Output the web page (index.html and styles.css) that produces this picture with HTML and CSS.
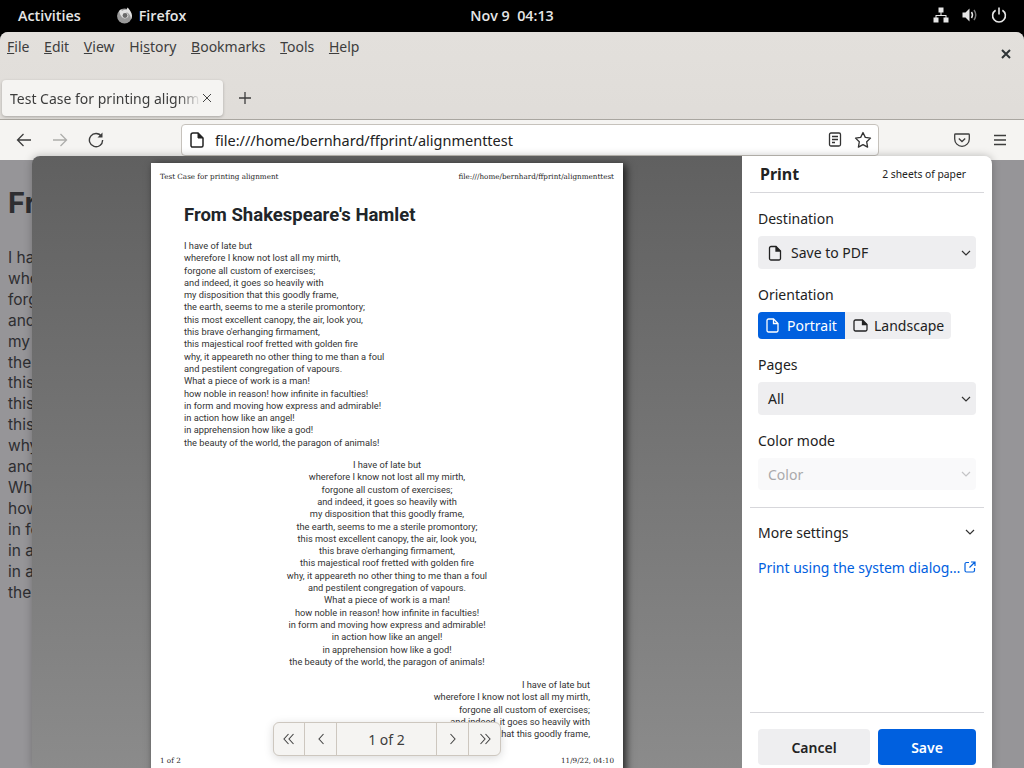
FILE: index.html
```html
<!DOCTYPE html>
<html lang="en">
<head>
    <meta charset="UTF-8">
    <title>Test Case for printing alignment</title>
    <link rel="stylesheet" href="styles.css">
</head>
<body>
    <div class="topbar">
        <div class="topbar-left">
            <span class="activities">Activities</span>
            <span class="app">
                <svg width="17" height="17" viewBox="0 0 16 16"><circle cx="8" cy="8.500" r="7" fill="#9a9a9a"/><path d="M3 4 C3.500 2.500 4.500 2.500 5 2 C5 3 5.500 3.500 6 3.500 C7.500 2.500 9 2.500 10 3 C10 2 10.500 1 11 0.500 C12 2 14.500 4 15 8 C15 9.500 14.500 11 14 11.500 C14 8 12 5.500 9.500 5 C11 6 12 7.500 11.500 9 C10.500 11 7 11.500 5.500 9.500 C4 7.500 3.500 6 3 4Z" fill="#e2e2e2"/><circle cx="8.500" cy="8" r="2.300" fill="#6a6a6a"/></svg>
                Firefox
            </span>
        </div>
        <div class="clock">Nov 9&nbsp; 04:13</div>
        <div class="tray">
            <svg width="16" height="16" viewBox="0 0 16 16" fill="#e6e6e6"><path d="M5.500 0.500h5v5h-5zM0.500 10.500h5v5h-5zM10.500 10.500h5v5h-5z"/><path d="M7.500 5h1v3h5v3h-1V9H3.500v2h-1V8h5z"/></svg>
            <svg width="16" height="16" viewBox="0 0 16 16" fill="none"><path d="M0.500 5.500h3l4-4v13l-4-4h-3z" fill="#e6e6e6"/><path d="M9.500 5 Q11.500 8 9.500 11" stroke="#e6e6e6" stroke-width="1.500"/><path d="M12 3 Q15.500 8 12 13" stroke="#777" stroke-width="1.500"/></svg>
            <svg width="16" height="16" viewBox="0 0 16 16" fill="none" stroke="#e6e6e6" stroke-width="1.600"><path d="M4.600 3.200 A6.400 6.400 0 1 0 11.400 3.200"/><path d="M8 0.500V7.500"/></svg>
        </div>
    </div>

    <div class="window">
        <div class="chrome">
            <div class="menubar">
                <div class="menus">
                    <span><u>F</u>ile</span>
                    <span><u>E</u>dit</span>
                    <span><u>V</u>iew</span>
                    <span>Hi<u>s</u>tory</span>
                    <span><u>B</u>ookmarks</span>
                    <span><u>T</u>ools</span>
                    <span><u>H</u>elp</span>
                </div>
                <svg class="win-close" width="10" height="10" viewBox="0 0 10 10" stroke="#2e3436" stroke-width="2"><path d="M1 1l8 8M9 1l-8 8"/></svg>
            </div>
            <div class="tabbar">
                <div class="tab">
                    <span class="tab-title">Test Case for printing alignment</span>
                    <svg width="12" height="12" viewBox="0 0 12 12" stroke="#444" stroke-width="1"><path d="M2 2l8 8M10 2l-8 8"/></svg>
                </div>
                <svg class="new-tab" width="14" height="14" viewBox="0 0 14 14" stroke="#3d3d3d" stroke-width="1.300"><path d="M7 1v12M1 7h12"/></svg>
            </div>
            <div class="navbar">
                <svg class="nav-back" width="16" height="16" viewBox="0 0 16 16" fill="none" stroke="#3d3d3d" stroke-width="1.300"><path d="M15 8H1.500M7.500 2L1.500 8l6 6"/></svg>
                <svg class="nav-fwd" width="16" height="16" viewBox="0 0 16 16" fill="none" stroke="#adadab" stroke-width="1.300"><path d="M1 8h13.500M8.500 2l6 6-6 6"/></svg>
                <svg class="nav-reload" width="16" height="16" viewBox="0 0 16 16" fill="none" stroke="#3d3d3d" stroke-width="1.400"><path d="M13.500 4.500A6.600 6.600 0 1 0 14.600 8"/><path d="M9.500 5.500h5v-5z" fill="#3d3d3d" stroke="none"/></svg>
                <div class="urlbar">
                    <svg width="14" height="16" viewBox="0 0 14 16" fill="none" stroke="#222" stroke-width="1.500"><path d="M3 1h5l5 5v7.500a1.500 1.500 0 0 1-1.500 1.500h-8.500A1.500 1.500 0 0 1 1 13.500v-10.500A2 2 0 0 1 3 1z"/><path d="M8 1v5h5" fill="#222" stroke-width="1"/></svg>
                    <span class="url">file:///home/bernhard/ffprint/alignmenttest</span>
                    <svg class="url-reader" width="14" height="15" viewBox="0 0 14 15" fill="none" stroke="#333" stroke-width="1.300"><rect x="1.500" y="1" width="11" height="13" rx="1.500"/><path d="M4 4.500h6M4 7.500h6M4 10.500h3"/></svg>
                    <svg width="18" height="17" viewBox="0 0 18 17" fill="none" stroke="#333" stroke-width="1.300"><path d="M9 1.500l2.300 4.900 5.200.7-3.800 3.700.9 5.300L9 13.600l-4.600 2.500.9-5.300L1.500 7.100l5.200-.7z" stroke-linejoin="round"/></svg>
                </div>
                <div class="nav-right">
                    <svg width="16" height="14" viewBox="0 0 16 14" fill="none" stroke="#3d3d3d" stroke-width="1.300"><path d="M1.500 1h13a.8.8 0 0 1 .8.8V6a7.300 7.300 0 0 1-14.600 0V1.800a.8.8 0 0 1 .8-.8z"/><path d="M4.800 5.500L8 8.500l3.200-3"/></svg>
                    <svg width="14" height="12" viewBox="0 0 14 12" stroke="#3d3d3d" stroke-width="1.300"><path d="M1 1.500h12M1 6h12M1 10.500h12"/></svg>
                </div>
            </div>
        </div>

        <div class="page-behind">
            <h1>From Shakespeare's Hamlet</h1>
            <p>I have of late but<br>wherefore I know not lost all my mirth,<br>forgone all custom of exercises;<br>and indeed, it goes so heavily with<br>my disposition that this goodly frame,<br>the earth, seems to me a sterile promontory;<br>this most excellent canopy, the air, look you,<br>this brave o'erhanging firmament,<br>this majestical roof fretted with golden fire<br>why, it appeareth no other thing to me than a foul<br>and pestilent congregation of vapours.<br>What a piece of work is a man!<br>how noble in reason! how infinite in faculties!<br>in form and moving how express and admirable!<br>in action how like an angel!<br>in apprehension how like a god!<br>the beauty of the world, the paragon of animals!</p>
        </div>

        <div class="print-dialog">
            <div class="preview">
                <div class="paper">
                    <div class="paper-head">
                        <span>Test Case for printing alignment</span>
                        <span>file:///home/bernhard/ffprint/alignmenttest</span>
                    </div>
                    <div class="paper-body">
                        <h2>From Shakespeare's Hamlet</h2>
                        <p>I have of late but<br>wherefore I know not lost all my mirth,<br>forgone all custom of exercises;<br>and indeed, it goes so heavily with<br>my disposition that this goodly frame,<br>the earth, seems to me a sterile promontory;<br>this most excellent canopy, the air, look you,<br>this brave o'erhanging firmament,<br>this majestical roof fretted with golden fire<br>why, it appeareth no other thing to me than a foul<br>and pestilent congregation of vapours.<br>What a piece of work is a man!<br>how noble in reason! how infinite in faculties!<br>in form and moving how express and admirable!<br>in action how like an angel!<br>in apprehension how like a god!<br>the beauty of the world, the paragon of animals!</p>
                        <p class="center">I have of late but<br>wherefore I know not lost all my mirth,<br>forgone all custom of exercises;<br>and indeed, it goes so heavily with<br>my disposition that this goodly frame,<br>the earth, seems to me a sterile promontory;<br>this most excellent canopy, the air, look you,<br>this brave o'erhanging firmament,<br>this majestical roof fretted with golden fire<br>why, it appeareth no other thing to me than a foul<br>and pestilent congregation of vapours.<br>What a piece of work is a man!<br>how noble in reason! how infinite in faculties!<br>in form and moving how express and admirable!<br>in action how like an angel!<br>in apprehension how like a god!<br>the beauty of the world, the paragon of animals!</p>
                        <p class="right">I have of late but<br>wherefore I know not lost all my mirth,<br>forgone all custom of exercises;<br>and indeed, it goes so heavily with<br>my disposition that this goodly frame,</p>
                    </div>
                    <div class="paper-foot">
                        <span>1 of 2</span>
                        <span>11/9/22, 04:10</span>
                    </div>
                </div>
                <div class="pager">
                    <button class="pager-btn"><svg width="12" height="12" viewBox="0 0 12 12" fill="none" stroke="#444" stroke-width="1.100"><path d="M5.500 1L1 6l4.500 5M10.500 1L6 6l4.500 5"/></svg></button>
                    <button class="pager-btn"><svg width="8" height="12" viewBox="0 0 8 12" fill="none" stroke="#444" stroke-width="1.100"><path d="M6.500 1L2 6l4.500 5"/></svg></button>
                    <div class="pager-label">1 of 2</div>
                    <button class="pager-btn"><svg width="8" height="12" viewBox="0 0 8 12" fill="none" stroke="#444" stroke-width="1.100"><path d="M1.500 1L6 6l-4.500 5"/></svg></button>
                    <button class="pager-btn"><svg width="12" height="12" viewBox="0 0 12 12" fill="none" stroke="#444" stroke-width="1.100"><path d="M1.500 1L6 6l-4.500 5M6.500 1L11 6l-4.500 5"/></svg></button>
                </div>
            </div>

            <div class="sidebar">
                <div class="side-head">
                    <span class="side-title">Print</span>
                    <span class="sheets">2 sheets of paper</span>
                </div>
                <div class="side-main">
                    <div class="field-label">Destination</div>
                    <div class="select">
                        <svg class="select-icon" width="14" height="16" viewBox="0 0 14 16" fill="none" stroke="#222" stroke-width="1.300"><path d="M3 1.500h5l4.500 4.500v7.500a1.500 1.500 0 0 1-1.500 1.500H3a1.500 1.500 0 0 1-1.500-1.500V3A1.500 1.500 0 0 1 3 1.500z"/><path d="M8 1.500V6h4.500" fill="#222"/></svg>
                        <span>Save to PDF</span>
                        <svg class="chevron" width="10" height="6" viewBox="0 0 10 6" fill="none" stroke="#333" stroke-width="1.200"><path d="M1 1l4 4 4-4"/></svg>
                    </div>
                    <div class="field-label">Orientation</div>
                    <div class="segments">
                        <div class="segment active">
                            <svg width="13" height="15" viewBox="0 0 13 15" fill="none" stroke="#fff" stroke-width="1.300"><path d="M2.500 1h5l4.500 4.500v7a1.500 1.500 0 0 1-1.500 1.500h-8A1.500 1.500 0 0 1 1 12.500v-10A1.500 1.500 0 0 1 2.500 1z"/><path d="M7.500 1v4.500H12"/></svg>
                            Portrait
                        </div>
                        <div class="segment">
                            <svg width="15" height="13" viewBox="0 0 15 13" fill="none" stroke="#222" stroke-width="1.300"><path d="M2.500 1h7L14 5.500v5a1.500 1.500 0 0 1-1.500 1.500h-10A1.500 1.500 0 0 1 1 10.500v-8A1.500 1.500 0 0 1 2.500 1z"/><path d="M9.500 1v4.500H14" fill="#222"/></svg>
                            Landscape
                        </div>
                    </div>
                    <div class="field-label">Pages</div>
                    <div class="select">
                        <span>All</span>
                        <svg class="chevron" width="10" height="6" viewBox="0 0 10 6" fill="none" stroke="#333" stroke-width="1.200"><path d="M1 1l4 4 4-4"/></svg>
                    </div>
                    <div class="field-label">Color mode</div>
                    <div class="select disabled">
                        <span>Color</span>
                        <svg class="chevron" width="10" height="6" viewBox="0 0 10 6" fill="none" stroke="#c4c4c6" stroke-width="1.200"><path d="M1 1l4 4 4-4"/></svg>
                    </div>
                    <hr class="rule">
                    <div class="more">
                        <span>More settings</span>
                        <svg width="10" height="6" viewBox="0 0 10 6" fill="none" stroke="#333" stroke-width="1.200"><path d="M1 1l4 4 4-4"/></svg>
                    </div>
                    <div class="sys-link">
                        <span>Print using the system dialog…</span>
                        <svg width="12" height="12" viewBox="0 0 12 12" fill="none" stroke="#0060df" stroke-width="1.200"><path d="M5 1.500H2.500a1.500 1.500 0 0 0-1.500 1.500v6.500a1.500 1.500 0 0 0 1.500 1.500H9a1.500 1.500 0 0 0 1.500-1.500V7M7 1h4v4M11 1L5.500 6.500"/></svg>
                    </div>
                </div>
                <div class="side-foot">
                    <button class="btn">Cancel</button>
                    <button class="btn primary">Save</button>
                </div>
            </div>
        </div>
    </div>
</body>
</html>
```

FILE: styles.css
```css
* {
    box-sizing: border-box;
}
body {
    margin: 0;
    width: 1024px;
    height: 768px;
    overflow: hidden;
    background-color: #000;
    font-family: 'Noto Sans', sans-serif;
    display: flex;
    flex-direction: column;
}
svg {
    flex: none;
    display: block;
}
button {
    font-family: inherit;
    border: none;
    padding: 0;
}

/* gnome top bar */
.topbar {
    height: 32px;
    flex: none;
    padding-bottom: 2px;
    color: #e6e6e6;
    font-family: 'Open Sans', sans-serif;
    font-size: 14.300px;
    font-weight: 600;
    display: grid;
    grid-template-columns: 1fr auto 1fr;
    align-items: center;
}
.topbar-left {
    display: flex;
    align-items: center;
    padding-left: 18px;
    gap: 35px;
}
.app {
    display: flex;
    align-items: center;
    gap: 6px;
}
.tray {
    display: flex;
    justify-content: flex-end;
    align-items: center;
    gap: 13px;
    padding-right: 17px;
}

/* firefox window */
.window {
    position: relative;
    flex: 1;
    min-height: 0;
    display: flex;
    flex-direction: column;
    border-radius: 8px 8px 0 0;
    overflow: hidden;
    background-color: #969598;
}
.chrome {
    flex: none;
    background: linear-gradient(#e3e0dc, #dedbd7);
    color: #3d3d3d;
}
.menubar {
    height: 30px;
    padding: 0 13px 2px 7px;
    display: flex;
    align-items: center;
    justify-content: space-between;
}
.menus {
    display: flex;
    gap: 14.700px;
    font-size: 14px;
}
.win-close {
    margin-top: 16px;
}
.tabbar {
    height: 57px;
    padding: 18px 0 3px 2px;
    display: flex;
    align-items: center;
}
.tab {
    width: 221px;
    height: 36px;
    background-color: #f5f4f2;
    border-radius: 4px;
    box-shadow: 0 1px 3px rgba(0, 0, 0, 0.25);
    display: flex;
    align-items: center;
    padding: 0 10px 0 8px;
    font-size: 14px;
}
.tab-title {
    flex: 1;
    white-space: nowrap;
    overflow: hidden;
    -webkit-mask-image: linear-gradient(to right, #000 88%, transparent);
    mask-image: linear-gradient(to right, #000 88%, transparent);
}
.new-tab {
    margin-left: 15px;
}
.navbar {
    height: 41px;
    background-color: #f5f4f2;
    border-top: 1px solid #a9a6a0;
    display: flex;
    align-items: center;
    padding: 0 17px 1px 16px;
}
.nav-fwd {
    margin-left: 20px;
}
.nav-reload {
    margin-left: 20px;
}
.urlbar {
    width: 698px;
    height: 32px;
    margin-left: 77px;
    background-color: #fff;
    border: 1px solid #c6c2bc;
    border-radius: 4px;
    display: flex;
    align-items: center;
    padding: 0 6px 0 8px;
    font-size: 14.500px;
    color: #222;
}
.url {
    flex: 1;
    margin-left: 11px;
}
.url-reader {
    margin-right: 12px;
}
.nav-right {
    margin-left: auto;
    display: flex;
    align-items: center;
    gap: 23px;
}

/* dimmed page behind the print dialog */
.page-behind {
    flex: 1;
    padding: 28px 8px;
    color: #2e2e31;
    font-family: 'Inter', sans-serif;
}
.page-behind h1 {
    margin: 0 0 30px;
    font-size: 29px;
    line-height: 30px;
    font-weight: 700;
}
.page-behind p {
    margin: 0;
    font-size: 15.500px;
    line-height: 20.900px;
    white-space: nowrap;
}

/* print dialog */
.print-dialog {
    position: absolute;
    left: 32px;
    top: 124px;
    width: 960px;
    height: 612px;
    border-radius: 8px 8px 0 0;
    overflow: hidden;
    display: flex;
    box-shadow: 0 0 8px rgba(0, 0, 0, 0.25);
}
.preview {
    position: relative;
    flex: 1;
    background: linear-gradient(#606060, #8b8b8b);
    padding: 7px 0 0 119px;
    overflow: hidden;
}
.paper {
    width: 472px;
    height: 611px;
    background-color: #fff;
    box-shadow: 3px 2px 8px rgba(0, 0, 0, 0.75);
    display: flex;
    flex-direction: column;
    color: #333;
}
.paper-head,
.paper-foot {
    flex: none;
    display: flex;
    justify-content: space-between;
    padding: 0 9px;
    font-family: 'DejaVu Serif', serif;
    font-size: 7.200px;
    line-height: 12px;
    color: #222;
}
.paper-head {
    padding-top: 8px;
}
.paper-foot {
    padding-bottom: 7px;
}
.paper-body {
    flex: 1;
    padding: 20px 33px 0;
    font-family: 'Roboto', sans-serif;
    font-size: 9.250px;
    line-height: 12.300px;
}
.paper-body h2 {
    margin: 0 0 13px;
    font-size: 18.500px;
    line-height: 24px;
    font-weight: 700;
    color: #212529;
}
.paper-body p {
    margin: 0 0 10px;
}
.center {
    text-align: center;
}
.paper-body .right {
    margin-top: 11px;
    text-align: right;
}
.pager {
    position: absolute;
    left: 241px;
    top: 566px;
    height: 34px;
    display: flex;
    background-color: #f5f4f2;
    border: 1px solid #cdc7bf;
    border-radius: 6px;
    box-shadow: 0 2px 10px rgba(0, 0, 0, 0.15);
    color: #3d3d3d;
}
.pager-btn {
    width: 30px;
    background: none;
    display: flex;
    align-items: center;
    justify-content: center;
}
.pager-btn + .pager-btn,
.pager-label + .pager-btn {
    border-left: 1px solid #cdc7bf;
    width: 32px;
}
.pager-label {
    width: 100px;
    border-left: 1px solid #cdc7bf;
    display: flex;
    align-items: center;
    justify-content: center;
    font-size: 14px;
}

/* settings column */
.sidebar {
    width: 250px;
    flex: none;
    background-color: #fff;
    color: #222;
    display: flex;
    flex-direction: column;
    font-size: 14px;
}
.side-head {
    height: 37px;
    margin: 0 8px;
    padding: 0 18px 0 10px;
    border-bottom: 1px solid #d7d7db;
    display: flex;
    align-items: center;
    justify-content: space-between;
}
.side-title {
    font-size: 16px;
    font-weight: 700;
}
.sheets {
    font-size: 10.300px;
}
.side-main {
    flex: 1;
    padding: 16px 16px 0;
}
.field-label {
    line-height: 20px;
    margin-bottom: 7px;
}
.select {
    height: 33px;
    margin-bottom: 16px;
    padding: 0 5px 0 10px;
    background-color: #eeeef0;
    border-radius: 4px;
    display: flex;
    align-items: center;
}
.select span {
    flex: 1;
}
.select-icon {
    margin-right: 9px;
}
.select.disabled {
    height: 32px;
    background-color: #f9f9fa;
    color: #a9a9ac;
    margin-bottom: 17px;
}
.segments {
    display: flex;
    height: 27px;
    width: 193px;
    margin-bottom: 16px;
    background-color: #eeeef0;
    border-radius: 4px;
    overflow: hidden;
}
.segment {
    display: flex;
    align-items: center;
    gap: 6px;
    padding: 0 8px;
}
.segment.active {
    flex: none;
    gap: 8px;
    background-color: #0060df;
    color: #fff;
    width: 87px;
}
.rule {
    margin: 0 -8px;
    border: none;
    border-top: 1px solid #d7d7db;
}
.more {
    height: 48px;
    padding-right: 1px;
    display: flex;
    align-items: center;
    justify-content: space-between;
}
.sys-link {
    display: flex;
    align-items: center;
    justify-content: space-between;
    margin-top: 1px;
    height: 20px;
    color: #0060df;
}
.side-foot {
    flex: none;
    height: 56px;
    margin: 0 8px;
    padding: 16px 8px 0;
    border-top: 1px solid #d7d7db;
    display: flex;
    gap: 8px;
}
.btn {
    height: 36px;
    width: 112px;
    border-radius: 4px;
    background-color: #eeeef0;
    color: #222;
    font-size: 14px;
    font-weight: 600;
}
.btn.primary {
    width: 98px;
    background-color: #0060df;
    color: #fff;
}
```
